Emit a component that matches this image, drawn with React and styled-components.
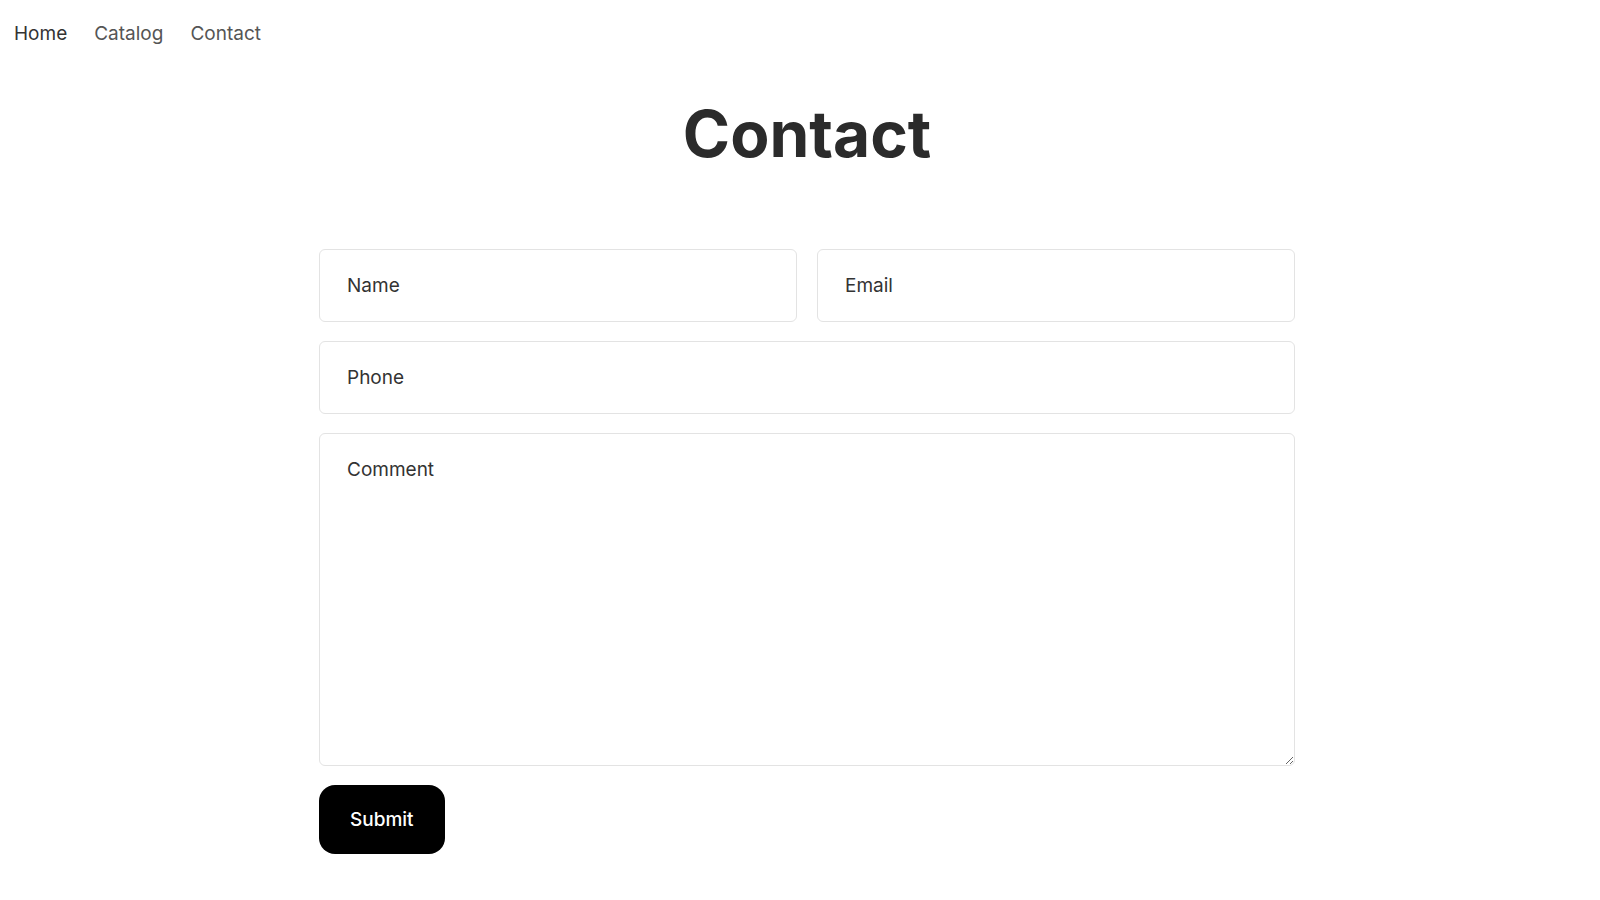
import React from "react";
import styled, { createGlobalStyle } from "styled-components";

const Global = createGlobalStyle`
  html, body { margin: 0; padding: 0; background: #ffffff; }
  body { font-family: Inter, "Noto Sans", "Liberation Sans", sans-serif; color: #333; }
  * { box-sizing: border-box; }
`;

const Nav = styled.nav`
  height: 66px;
  display: flex;
  align-items: center;
  gap: 27px;
  padding: 0 14px;
`;

const NavLink = styled.a`
  font-size: 19px;
  color: ${(p) => (p.$active ? "#333333" : "#555555")};
  text-decoration: none;
  line-height: 1;
`;

const Main = styled.main`
  padding-left: 14px;
  display: flex;
  flex-direction: column;
  align-items: center;
`;

const Title = styled.h1`
  margin: 30px 0 0;
  font-size: 64px;
  line-height: 76px;
  font-weight: 700;
  color: #2b2b2b;
  letter-spacing: 0;
`;

const Form = styled.form`
  width: 976px;
  margin-top: 77px;
  display: flex;
  flex-direction: column;
  gap: 19px;
`;

const Row = styled.div`
  display: grid;
  grid-template-columns: 1fr 1fr;
  gap: 20px;
`;

const fieldStyles = `
  width: 100%;
  border: 1.5px solid #e3e3e3;
  border-radius: 6px;
  font-family: Inter, "Noto Sans", "Liberation Sans", sans-serif;
  font-size: 19px;
  color: #333;
  background: #fff;
  outline: none;
  &::placeholder { color: #333; opacity: 1; }
`;

const Input = styled.input`
  ${fieldStyles}
  height: 73px;
  padding: 0 27px;
`;

const TextArea = styled.textarea`
  ${fieldStyles}
  display: block;
  height: 333px;
  padding: 26px 27px;
  line-height: 20px;
  resize: vertical;
`;

const Submit = styled.button`
  align-self: flex-start;
  height: 69px;
  padding: 0 31px;
  border: none;
  border-radius: 16px;
  background: #000;
  color: #fff;
  font-family: Inter, "Noto Sans", "Liberation Sans", sans-serif;
  font-size: 19px;
  font-weight: 500;
  cursor: pointer;
`;

export default function App() {
  return (
    <>
      <Global />
      <Nav>
        <NavLink href="#" $active>Home</NavLink>
        <NavLink href="#">Catalog</NavLink>
        <NavLink href="#">Contact</NavLink>
      </Nav>
      <Main>
        <Title>Contact</Title>
        <Form onSubmit={(e) => e.preventDefault()}>
          <Row>
            <Input placeholder="Name" />
            <Input placeholder="Email" type="email" />
          </Row>
          <Input placeholder="Phone" />
          <TextArea placeholder="Comment" />
          <Submit type="submit">Submit</Submit>
        </Form>
      </Main>
    </>
  );
}
